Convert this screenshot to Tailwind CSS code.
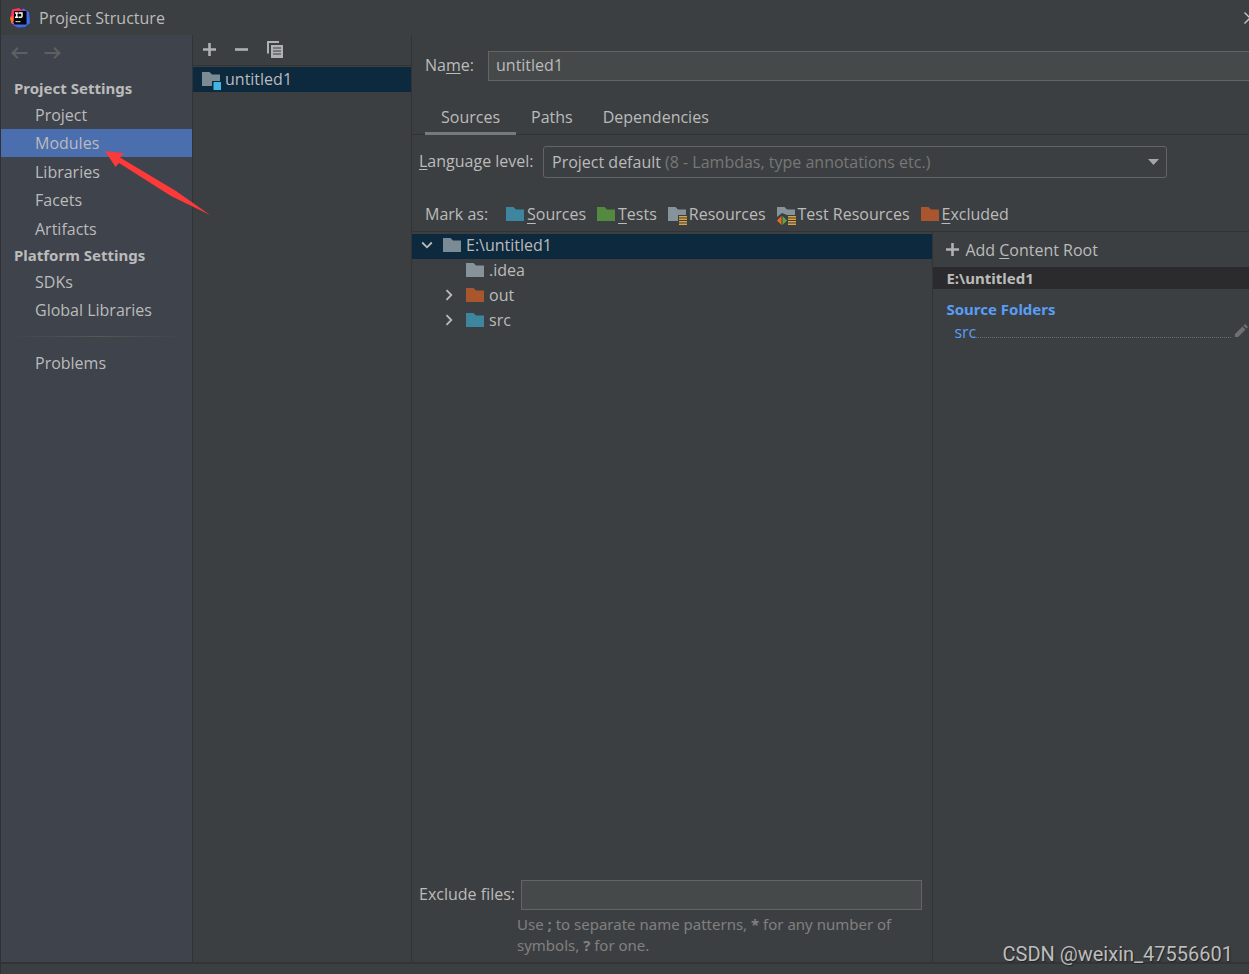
<!DOCTYPE html>
<html lang="en">
<head>
<meta charset="utf-8">
<meta name="viewport" content="width=device-width, initial-scale=1">
<title>Project Structure</title>
<script src="https://cdn.jsdelivr.net/npm/@tailwindcss/browser@4"></script>
</head>
<body class="bg-[#3c3f41]">
<svg class="hidden" aria-hidden="true">
  <symbol id="folder" viewBox="0 0 18 14"><path d="M0 0h7.5l2.500 2.500h8V14H0z" fill="currentColor"/></symbol>
  <symbol id="lines" viewBox="0 0 8 9"><path d="M0 0h8v1.600H0zM0 2.500h8v1.600H0zM0 5h8v1.600H0zM0 7.400h8V9H0z" fill="#d9a343"/></symbol>
  <symbol id="plus" viewBox="0 0 13 13"><path d="M6.500 0v13M0 6.500h13" stroke="currentColor" stroke-width="2.600"/></symbol>
  <symbol id="chev" viewBox="0 0 8 12"><path d="M1.500 1.200 6.300 6 1.500 10.800" fill="none" stroke="currentColor" stroke-width="1.800"/></symbol>
</svg>
<div class="relative flex min-h-screen flex-col overflow-hidden border-l border-[#2f3133] bg-[#3c3f41] font-['Open_Sans',sans-serif] text-[16px] leading-5 text-[#bbbbbb]">
  <header class="flex h-[35px] items-center pl-[9px]">
    <svg class="size-5 shrink-0" viewBox="0 0 20 20" aria-hidden="true">
      <path d="M2 1.500 9 0l4 3-1 7-8 3-4-1 1-5z" fill="#fe315d"/>
      <path d="M0 9.500 3 8v8l-1.500-.5z" fill="#f97a12"/>
      <path d="m10 4 3-3.500L19 4l1 11-5 4-7 .5-5-2.500z" fill="#3b6cf0"/>
      <path d="m12 3 1-2.500L17 3l-1 4z" fill="#8a4fd0"/>
      <path d="m1 14 3 1 2 3.500z" fill="#b74af7"/>
      <path d="M4 3h12.500v13.500H4z" fill="#050505"/>
      <path d="M5 5h3.500M5 9.200h3.500M6.750 5v4.200M9 5h3v3.200q0 1-1 1H9" fill="none" stroke="#fff" stroke-width="1.400"/>
      <path d="M5.500 13h5v1.200h-5z" fill="#bbb"/>
    </svg>
    <h1 class="ml-[9px]">Project Structure</h1>
    <button class="ml-auto -mr-[7px]" aria-label="Close"><svg class="size-3" viewBox="0 0 12 12"><path d="m.5.5 11 11m0-11-11 11" stroke="#c8c8c8" stroke-width="1.300"/></svg></button>
  </header>

  <div class="flex flex-1 border-b-2 border-[#333436]">
    <nav class="flex w-[192px] shrink-0 flex-col border-r border-[#323335] bg-[#3f434c]">
      <div class="flex h-[41px] gap-4 pt-3 pl-[10px] text-[#5e5f60]">
        <button class="h-3" aria-label="Back"><svg class="h-3 w-[17px]" viewBox="0 0 17 12"><path d="M16.500 6H1.500M7 .8 1.500 6 7 11.200" fill="none" stroke="currentColor" stroke-width="2"/></svg></button>
        <button class="h-3" aria-label="Forward"><svg class="h-3 w-[17px]" viewBox="0 0 17 12"><path d="M.5 6h15M10 .8 15.500 6 10 11.200" fill="none" stroke="currentColor" stroke-width="2"/></svg></button>
      </div>
      <h2 class="flex h-[25px] items-center pb-[2px] pl-[13px] font-['Noto_Sans',sans-serif] text-[15px] font-bold">Project Settings</h2>
      <ul>
        <li><a href="#" class="flex h-7 items-center pl-[34px]">Project</a></li>
        <li><a href="#" class="flex h-7 items-center bg-[#4b6eaf] pl-[34px]">Modules</a></li>
        <li class="mt-px"><a href="#" class="flex h-7 items-center pl-[34px]">Libraries</a></li>
        <li><a href="#" class="flex h-7 items-center pl-[34px]">Facets</a></li>
        <li class="mt-px"><a href="#" class="flex h-7 items-center pl-[34px]">Artifacts</a></li>
      </ul>
      <h2 class="flex h-[25px] items-center pb-[2px] pl-[13px] font-['Noto_Sans',sans-serif] text-[15px] font-bold">Platform Settings</h2>
      <ul>
        <li><a href="#" class="flex h-7 items-center pl-[34px]">SDKs</a></li>
        <li><a href="#" class="flex h-7 items-center pl-[34px]">Global Libraries</a></li>
      </ul>
      <div class="mx-[10px] my-3 h-px bg-linear-to-r from-transparent via-[#5a5754] to-transparent"></div>
      <a href="#" class="flex h-7 items-center pl-[34px]">Problems</a>
    </nav>

    <section class="w-[219px] shrink-0 border-r border-[#323335]" aria-label="Modules">
      <div class="flex h-[31px] items-center gap-[19px] border-b border-[#323335] pb-[2px] pl-[10px] text-[#afb1b3]">
        <button aria-label="Add"><svg class="size-[13px]"><use href="#plus"/></svg></button>
        <button aria-label="Remove"><svg class="size-[13px]" viewBox="0 0 13 13"><path d="M0 6.500h13" stroke="currentColor" stroke-width="2.600"/></svg></button>
        <button aria-label="Copy"><svg class="h-[17px] w-4" viewBox="0 0 16 17"><path d="M0 0h12v2H2v10.500H0z" fill="currentColor"/><path d="M4 4h12v13H4z" fill="currentColor"/><path d="M6 7h8M6 10h8M6 13h8" stroke="#3c3f41" stroke-width="1.100"/></svg></button>
      </div>
      <div class="mt-px flex h-[25px] items-center gap-1 bg-[#0d293e] pl-[9px]">
        <svg class="mt-[2px] h-[18px] w-[19px]" viewBox="0 0 19 18"><path d="M0 0h7.500L10 2.500h8V14H0z" fill="#7b8b96"/><path d="M10 9h9v9h-9z" fill="#0d293e"/><path d="M11.500 10H19v8h-7.500z" fill="#40b6e0"/></svg>
        <span class="pb-px">untitled1</span>
      </div>
    </section>

    <main class="flex min-w-0 flex-1 flex-col">
      <div class="mt-4 flex items-center pl-[13px]">
        <label for="name" class="w-[63px] pb-[2px]">Na<u class="underline-offset-2">m</u>e:</label>
        <input id="name" value="untitled1" class="h-[30px] min-w-0 flex-1 border border-r-0 border-[#646464] bg-[#45494a] px-[7px] pb-[2px] outline-none">
      </div>
      <div role="tablist" class="mt-[19px] flex h-[35px] border-b border-[#323335] pl-[13px]">
        <button role="tab" aria-selected="true" class="-mb-px h-[35px] border-b-[3px] border-[#747a80] px-4 pt-[2px]">Sources</button>
        <button role="tab" class="h-8 px-[15px] pt-[2px]">Paths</button>
        <button role="tab" class="h-8 px-[15px] pt-[2px]">Dependencies</button>
      </div>
      <div class="mt-[11px] flex items-center pl-[7px]">
        <label for="level" class="w-[124px] pb-[2px] whitespace-nowrap"><u class="underline-offset-2">L</u>anguage level:</label>
        <div class="relative mr-[82px] flex-1">
          <select id="level" class="block h-8 w-full appearance-none rounded-[3px] border border-[#646464] px-2"><option>Project default</option></select>
          <span class="pointer-events-none absolute top-[6px] left-[122px] whitespace-nowrap text-[#777777]">(8 - Lambdas, type annotations etc.)</span>
          <svg class="pointer-events-none absolute top-[13px] right-2 h-[6px] w-[11px]" viewBox="0 0 11 6"><path d="M0 0h11L5.500 6z" fill="#a4a6a8"/></svg>
        </div>
      </div>
      <div class="mt-5 flex h-[34px] items-center gap-[11px] border-b border-[#323335] pb-[2px] pl-[13px] whitespace-nowrap">
        <span class="w-[70px]">Mark as:</span>
        <button class="flex items-center gap-[3px]"><svg class="h-[14px] w-[18px] text-[#3e86a0]"><use href="#folder"/></svg><span><u class="underline-offset-3">S</u>ources</span></button>
        <button class="flex items-center gap-[3px]"><svg class="h-[14px] w-[18px] text-[#548a3f]"><use href="#folder"/></svg><span><u class="underline-offset-3">T</u>ests</span></button>
        <button class="flex items-center gap-[2px]"><svg class="mt-1 h-[18px] w-[19px]" viewBox="0 0 19 18"><path d="M0 0h7.500L10 2.500h8V14H0z" fill="#87939a"/><path d="M10 8h9v10h-9z" fill="#3c3f41"/><use href="#lines" x="11" y="9" width="8" height="9"/></svg><span>Resources</span></button>
        <button class="flex items-center gap-[2px]"><svg class="mt-1 h-[18px] w-[19px]" viewBox="0 0 19 18"><path d="M0 0h7.500L10 2.500h8V14H0z" fill="#87939a"/><path d="M0 10l5-4 5 2h9v10H0z" fill="#3c3f41"/><path d="M4.500 9v9L0 13.500z" fill="#f26522"/><path d="M5.500 9v9l4.500-4.500z" fill="#59a83f"/><use href="#lines" x="11" y="9" width="8" height="9"/></svg><span>Test Resources</span></button>
        <button class="flex items-center gap-[3px]"><svg class="h-[14px] w-[18px] text-[#a9562e]"><use href="#folder"/></svg><span><u class="underline-offset-3">E</u>xcluded</span></button>
      </div>

      <div class="flex flex-1">
        <div class="flex min-w-0 flex-[521_1_0%] flex-col border-r border-[#323335] pt-[2px]">
          <ul>
            <li class="flex h-[25px] items-center bg-[#0d293e] pb-[3px] pl-[11px]"><svg class="mr-[9px] h-3 w-2 rotate-90"><use href="#chev"/></svg><svg class="mr-[5px] ml-[3px] h-[14px] w-[18px] text-[#7b8b96]"><use href="#folder"/></svg>E:\untitled1</li>
            <li class="flex h-[25px] items-center pb-[3px] pl-[54px]"><svg class="mr-[5px] h-[14px] w-[18px] text-[#87939a]"><use href="#folder"/></svg>.idea</li>
            <li class="flex h-[25px] items-center pb-[3px] pl-[33px]"><svg class="mr-[13px] h-3 w-2"><use href="#chev"/></svg><svg class="mr-[5px] h-[14px] w-[18px] text-[#a9562e]"><use href="#folder"/></svg>out</li>
            <li class="flex h-[25px] items-center pb-[3px] pl-[33px]"><svg class="mr-[13px] h-3 w-2"><use href="#chev"/></svg><svg class="mr-[5px] h-[14px] w-[18px] text-[#3e86a0]"><use href="#folder"/></svg>src</li>
          </ul>
          <div class="mt-auto mr-[10px] flex items-center pl-[7px]">
            <label for="exclude" class="w-[102px] pb-[2px] whitespace-nowrap">Exclude files:</label>
            <input id="exclude" class="h-[30px] min-w-0 flex-1 border border-[#646464] bg-[#45494a] px-[7px] outline-none">
          </div>
          <p class="mt-1 mb-[6px] pl-[105px] font-['Noto_Sans',sans-serif] text-[15px] leading-[21px] text-[#808080]">Use <b>;</b> to separate name patterns, <b>*</b> for any number of<br>symbols, <b>?</b> for one.</p>
        </div>
        <aside class="flex-[316_1_0%]">
          <button class="flex h-[35px] items-center gap-[6px] pl-[13px]"><svg class="size-[13px] text-[#afb1b3]"><use href="#plus"/></svg><span>Add <u class="underline-offset-2">C</u>ontent Root</span></button>
          <h3 class="flex h-[22px] items-center bg-[#2b2b2d] pl-[13px] font-['Noto_Sans',sans-serif] text-[15px] font-bold">E:\untitled1</h3>
          <h4 class="mt-[10px] pl-[13px] font-['Noto_Sans',sans-serif] text-[15px] font-bold text-[#589df6]">Source Folders</h4>
          <div class="mt-[3px] flex items-center pl-[21px]">
            <a href="#" class="text-[#589df6]">src</a>
            <span class="mt-[10px] flex-1 border-b border-dotted border-[#6a6d70]"></span>
            <button class="mb-[3px] ml-1" aria-label="Edit"><svg class="mr-px size-[13px]" viewBox="0 0 13 13"><path d="M0 13v-3l7.500-7.500 3 3L3 13zM8.500 1.500 10 0l3 3-1.500 1.500z" fill="#6e7072"/></svg></button>
          </div>
        </aside>
      </div>
    </main>
  </div>
  <footer class="h-[10px]"></footer>

  <svg class="pointer-events-none absolute top-[150px] left-[104px] h-[66px] w-[106px]" viewBox="105 150 106 66" aria-hidden="true"><path d="M105 151l19 2.300-4 4.200L176 191l34 24-39-19-52-33-3.500 4z" fill="#fd3a3a"/></svg>
  <p class="absolute right-4 bottom-2 font-[Roboto,sans-serif] text-[20px] leading-6 text-[#bcbdbe] [text-shadow:1px_1px_1px_#222]">CSDN @weixin_47556601</p>
</div>
</body>
</html>
